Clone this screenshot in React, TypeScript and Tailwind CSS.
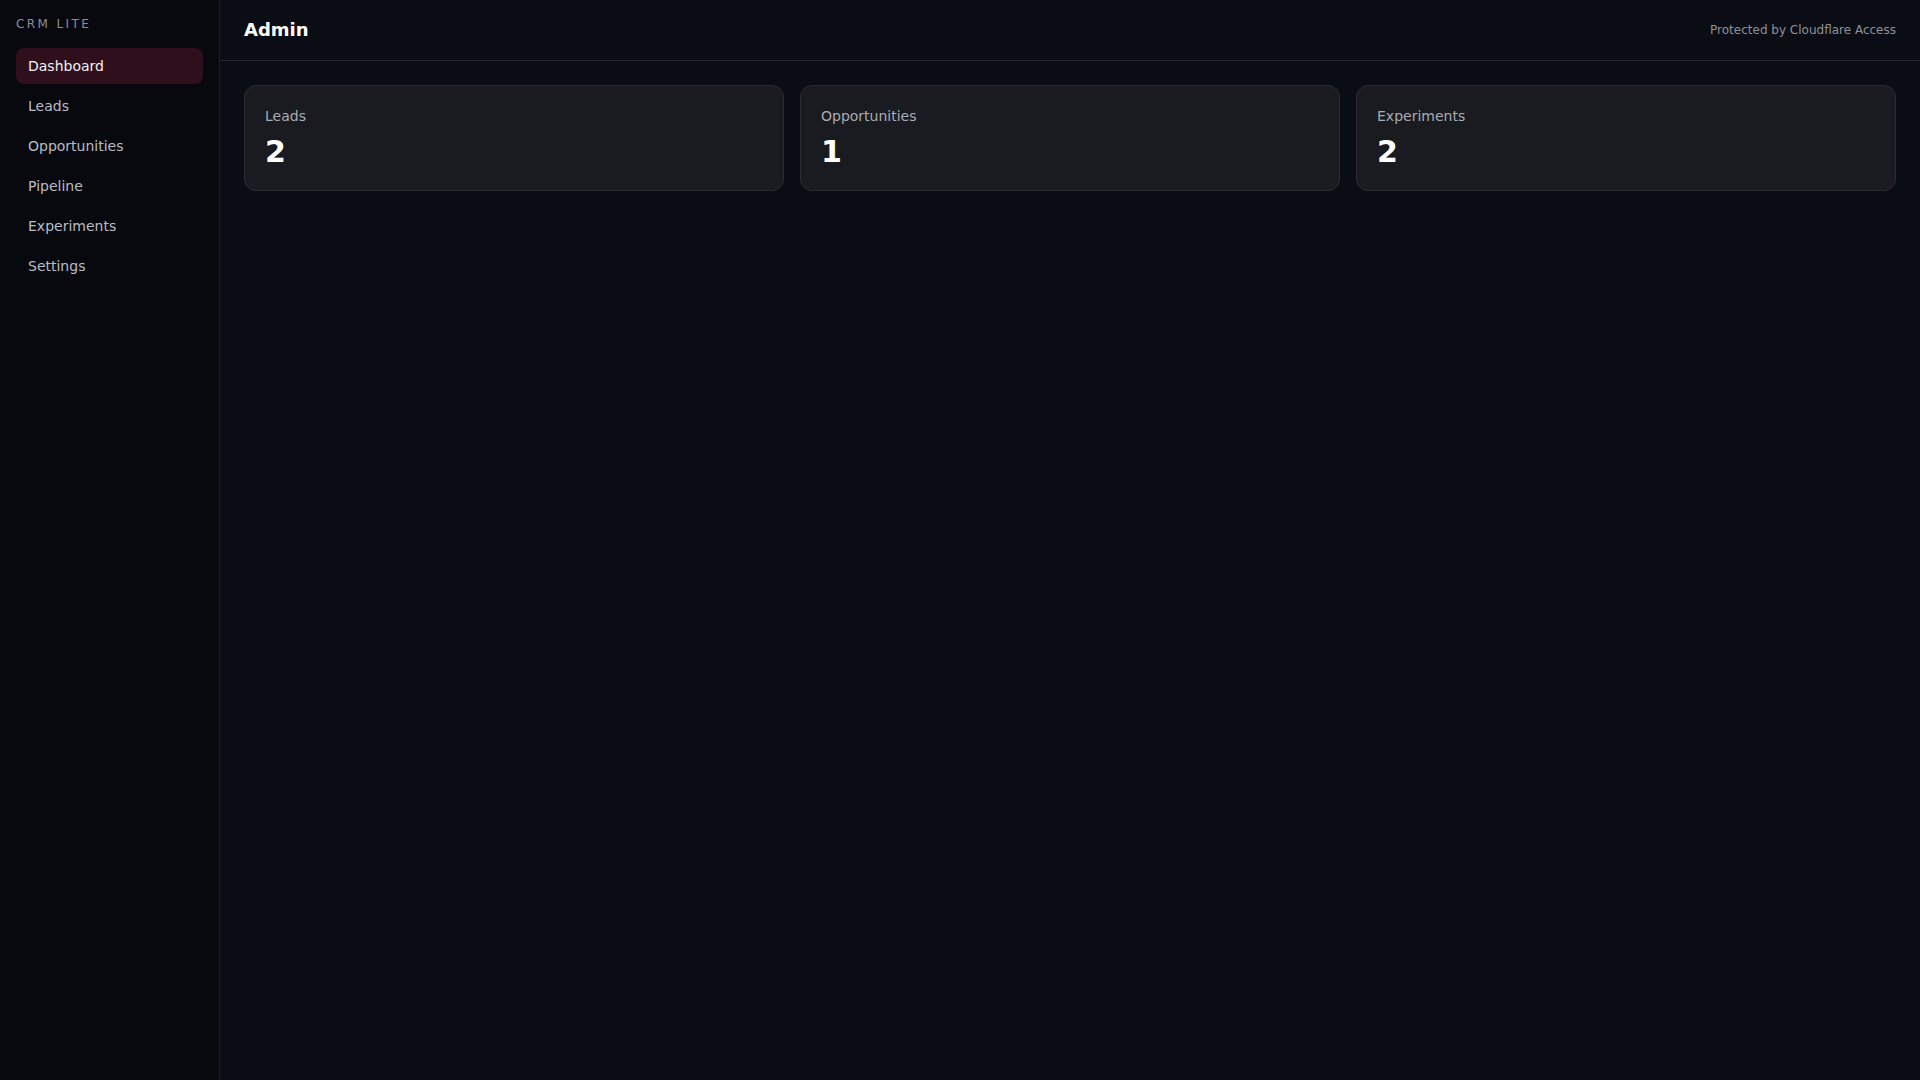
const nav = ["Dashboard", "Leads", "Opportunities", "Pipeline", "Experiments", "Settings"];

const stats = [
  { label: "Leads", value: 2 },
  { label: "Opportunities", value: 1 },
  { label: "Experiments", value: 2 },
];

export default function App() {
  return (
    <div className="flex h-screen w-full bg-[#0a0d14] text-white font-['DejaVu_Sans',sans-serif]">
      <aside className="flex w-[220px] shrink-0 flex-col border-r border-[#1c1e24] bg-[#08090e] px-4 pt-4">
        <div className="text-xs tracking-[0.2em] text-[#8a8e96]">CRM LITE</div>
        <nav className="mt-4 flex flex-col gap-1">
          {nav.map((item, i) => (
            <a
              key={item}
              className={
                i === 0
                  ? "flex h-9 items-center rounded-lg bg-[#2f0f1c] px-3 text-sm text-[#f1f1f3]"
                  : "flex h-9 items-center rounded-lg px-3 text-sm text-[#b9bcc4]"
              }
            >
              {item}
            </a>
          ))}
        </nav>
      </aside>
      <main className="flex flex-1 flex-col">
        <header className="flex h-[61px] items-center justify-between border-b border-[#22252c] px-6">
          <h1 className="text-lg font-bold">Admin</h1>
          <span className="text-xs text-[#8e9199]">Protected by Cloudflare Access</span>
        </header>
        <div className="grid grid-cols-3 gap-4 p-6">
          {stats.map((s) => (
            <div key={s.label} className="rounded-xl border border-[#2c2d33] bg-[#1a1b20] px-5 py-5">
              <div className="text-sm text-[#a9acb3]">{s.label}</div>
              <div className="mt-2 text-3xl font-bold">{s.value}</div>
            </div>
          ))}
        </div>
      </main>
    </div>
  );
}
